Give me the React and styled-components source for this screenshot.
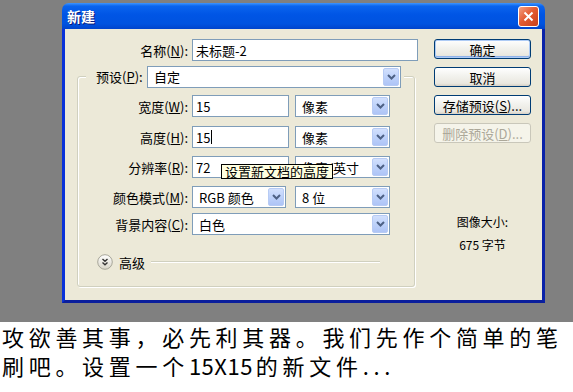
import React from "react";
import styled, { createGlobalStyle } from "styled-components";

const GlobalStyle = createGlobalStyle`
  body {
    margin: 0;
    font-family: "Noto Sans CJK SC", "Noto Sans", sans-serif;
  }
`;

const Page = styled.div`
  width: 573px;
  height: 392px;
  display: flex;
  flex-direction: column;
  overflow: hidden;
`;

const Desktop = styled.div`
  height: 322px;
  background: #808080;
  padding: 3px 0 0 62px;
  box-sizing: border-box;
`;

const Window = styled.div`
  width: 483px;
  height: 300px;
  display: flex;
  flex-direction: column;
  border-radius: 7px 7px 0 0;
  overflow: hidden;
`;

const TitleBar = styled.div`
  height: 26px;
  flex: none;
  display: flex;
  align-items: center;
  justify-content: space-between;
  padding: 0 6px 0 5px;
  background: linear-gradient(
    180deg,
    #3d95ff 0%,
    #0a64ee 12%,
    #0055e5 45%,
    #0053e0 80%,
    #0044cc 100%
  );
  color: #fff;
  font-size: 14px;
  font-weight: 700;
  text-shadow: 1px 1px 0 #0a1a7a;
`;

const CloseButton = styled.div`
  width: 19px;
  height: 19px;
  border: 1px solid #fff;
  border-radius: 3px;
  background: linear-gradient(135deg, #f3a184 0%, #e45c33 45%, #c8401b 100%);
  display: flex;
  align-items: center;
  justify-content: center;
`;

const Body = styled.div`
  flex: 1;
  display: flex;
  background: #ece9d8;
  border-left: 3px solid #0831d9;
  border-right: 3px solid #0a22a8;
  border-bottom: 3px solid #0a1e9c;
  padding: 10px 10px 0 12px;
`;

const LeftColumn = styled.div`
  width: 341px;
  display: flex;
  flex-direction: column;
`;

const Label = styled.div`
  width: ${(p) => p.$width || 110}px;
  flex: none;
  text-align: right;
  font-size: 13px;
  color: #000;
  white-space: nowrap;
`;

const Row = styled.div`
  position: relative;
  display: flex;
  align-items: center;
  gap: 4px;
  height: 22px;
  margin-top: ${(p) => p.$top || 0}px;
`;

const TextInput = styled.div`
  width: ${(p) => p.$width}px;
  height: 22px;
  box-sizing: border-box;
  border: 1px solid #7f9db9;
  background: #fff;
  display: flex;
  align-items: center;
  padding-left: 3px;
  font-size: 13px;
  color: #000;
`;

const Caret = styled.span`
  width: 1px;
  height: 14px;
  background: #000;
  margin-left: 1px;
`;

const SelectBox = styled.div`
  width: ${(p) => p.$width}px;
  height: 22px;
  box-sizing: border-box;
  border: 1px solid #7f9db9;
  background: #fff;
  display: flex;
  align-items: center;
  justify-content: space-between;
  padding: 1px;
  font-size: 13px;
  color: #000;
  margin-left: ${(p) => p.$left || 0}px;
`;

const SelectValue = styled.span`
  padding-left: 5px;
  white-space: nowrap;
`;

const ArrowButton = styled.div`
  width: 16px;
  height: 18px;
  box-sizing: border-box;
  border: 1px solid #b7cbf4;
  border-radius: 2px;
  background: linear-gradient(180deg, #d2e0fd 0%, #bed2fa 50%, #aec4f6 100%);
  display: flex;
  align-items: center;
  justify-content: center;
`;

const GroupBox = styled.div`
  width: 338px;
  height: 211px;
  box-sizing: border-box;
  margin-top: 15px;
  border: 1px solid #d0d0bf;
  border-radius: 3px;
  box-shadow: inset 1px 1px 0 #fff, 1px 1px 0 #fff;
  display: flex;
  flex-direction: column;
`;

const GroupHeader = styled.div`
  align-self: flex-start;
  display: flex;
  align-items: center;
  gap: 7px;
  height: 21px;
  margin: -11px 0 0 8px;
  padding: 0 3px 0 10px;
  background: #ece9d8;
`;

const Tooltip = styled.div`
  position: absolute;
  z-index: 2;
  left: 143px;
  top: 8px;
  background: #ffffe1;
  border: 1px solid #000;
  font-size: 13px;
  line-height: 13px;
  padding: 0 3px;
  white-space: nowrap;
  color: #000;
`;

const AdvancedRow = styled.div`
  display: flex;
  align-items: center;
  margin: 19px 34px 0 19px;
  height: 16px;
  font-size: 13px;
`;

const AdvancedText = styled.span`
  margin: 0 6px;
`;

const Rule = styled.div`
  flex: 1;
  height: 1px;
  background: #d0d0bf;
  border-bottom: 1px solid #fff;
`;

const RightColumn = styled.div`
  width: 97px;
  margin-left: 16px;
  display: flex;
  flex-direction: column;
  gap: 8px;
`;

const Button = styled.div`
  height: 20px;
  box-sizing: border-box;
  border: 1px solid ${(p) => (p.$disabled ? "#c9c7ba" : "#003c74")};
  border-radius: 3px;
  background: ${(p) =>
    p.$disabled
      ? "#f5f4ea"
      : "linear-gradient(180deg, #ffffff 0%, #f3f3ef 40%, #eae8e0 85%, #d6d0c5 100%)"};
  box-shadow: ${(p) =>
    p.$default ? "inset 0 0 0 1px #aecbf5, inset 0 -1px 0 1px #8fb2ea" : "none"};
  color: ${(p) => (p.$disabled ? "#aca899" : "#000")};
  font-size: 13px;
  display: flex;
  align-items: center;
  justify-content: center;
  white-space: nowrap;
`;

const ImageInfo = styled.div`
  margin-top: 62px;
  display: flex;
  flex-direction: column;
  align-items: center;
  gap: 5px;
  font-size: 12px;
  line-height: 18px;
  color: #000;
`;

const Caption = styled.div`
  flex: 1;
  background: #fff;
  padding: 0 0 0 2px;
`;

const CaptionLine = styled.div`
  font-size: 22px;
  line-height: 29px;
  height: 29px;
  letter-spacing: 4.7px;
  color: #000;
  white-space: nowrap;
`;

const Latin = styled.span`
  letter-spacing: 0.5px;
  margin-right: 3px;
`;

const Chevron = () => (
  <svg width="9" height="6" viewBox="0 0 9 6">
    <path d="M1 1 L4.5 4.5 L8 1" fill="none" stroke="#4d6185" strokeWidth="2" />
  </svg>
);

const Select = ({ width, value, left }) => (
  <SelectBox $width={width} $left={left}>
    <SelectValue>{value}</SelectValue>
    <ArrowButton>
      <Chevron />
    </ArrowButton>
  </SelectBox>
);

const ExpandIcon = () => (
  <svg width="16" height="16" viewBox="0 0 16 16">
    <defs>
      <linearGradient id="exp" x1="0" y1="0" x2="0" y2="1">
        <stop offset="0" stopColor="#ffffff" />
        <stop offset="1" stopColor="#d8d5c8" />
      </linearGradient>
    </defs>
    <circle cx="8" cy="8" r="7.3" fill="url(#exp)" stroke="#a7a699" />
    <path d="M5.5 5 L8 7.2 L10.5 5 M5.5 8.5 L8 10.7 L10.5 8.5" fill="none" stroke="#333" strokeWidth="1.4" />
  </svg>
);

export default function App() {
  return (
    <Page>
      <GlobalStyle />
      <Desktop>
        <Window>
          <TitleBar>
            <span>新建</span>
            <CloseButton>
              <svg width="11" height="11" viewBox="0 0 11 11">
                <path d="M1.5 1.5 L9.5 9.5 M9.5 1.5 L1.5 9.5" stroke="#fff" strokeWidth="2" />
              </svg>
            </CloseButton>
          </TitleBar>
          <Body>
            <LeftColumn>
              <Row>
                <Label $width={111}>
                  名称(<u>N</u>):
                </Label>
                <TextInput $width={226}>未标题-2</TextInput>
              </Row>
              <GroupBox>
                <GroupHeader>
                  <Label $width={44}>
                    预设(<u>P</u>):
                  </Label>
                  <Select width={254} value="自定" />
                </GroupHeader>
                <Row $top={8}>
                  <Label>
                    宽度(<u>W</u>):
                  </Label>
                  <TextInput $width={97}>15</TextInput>
                  <Select width={95} value="像素" left={2} />
                </Row>
                <Row $top={9}>
                  <Label>
                    高度(<u>H</u>):
                  </Label>
                  <TextInput $width={97}>
                    15
                    <Caret />
                  </TextInput>
                  <Select width={95} value="像素" left={2} />
                </Row>
                <Row $top={8}>
                  <Label>
                    分辨率(<u>R</u>):
                  </Label>
                  <TextInput $width={97}>72</TextInput>
                  <Select width={95} value="像素/英寸" left={2} />
                  <Tooltip>设置新文档的高度</Tooltip>
                </Row>
                <Row $top={8}>
                  <Label>
                    颜色模式(<u>M</u>):
                  </Label>
                  <Select width={94} value="RGB 颜色" />
                  <Select width={95} value="8 位" left={5} />
                </Row>
                <Row $top={5}>
                  <Label>
                    背景内容(<u>C</u>):
                  </Label>
                  <Select width={198} value="白色" />
                </Row>
                <AdvancedRow>
                  <ExpandIcon />
                  <AdvancedText>高级</AdvancedText>
                  <Rule />
                </AdvancedRow>
              </GroupBox>
            </LeftColumn>
            <RightColumn>
              <Button $default>确定</Button>
              <Button>取消</Button>
              <Button>
                存储预设(<u>S</u>)...
              </Button>
              <Button $disabled>
                删除预设(<u>D</u>)...
              </Button>
              <ImageInfo>
                <span>图像大小:</span>
                <span>675 字节</span>
              </ImageInfo>
            </RightColumn>
          </Body>
        </Window>
      </Desktop>
      <Caption>
        <CaptionLine>攻欲善其事，必先利其器。我们先作个简单的笔</CaptionLine>
        <CaptionLine>
          刷吧。设置一个<Latin>15X15</Latin>的新文件...
        </CaptionLine>
      </Caption>
    </Page>
  );
}
